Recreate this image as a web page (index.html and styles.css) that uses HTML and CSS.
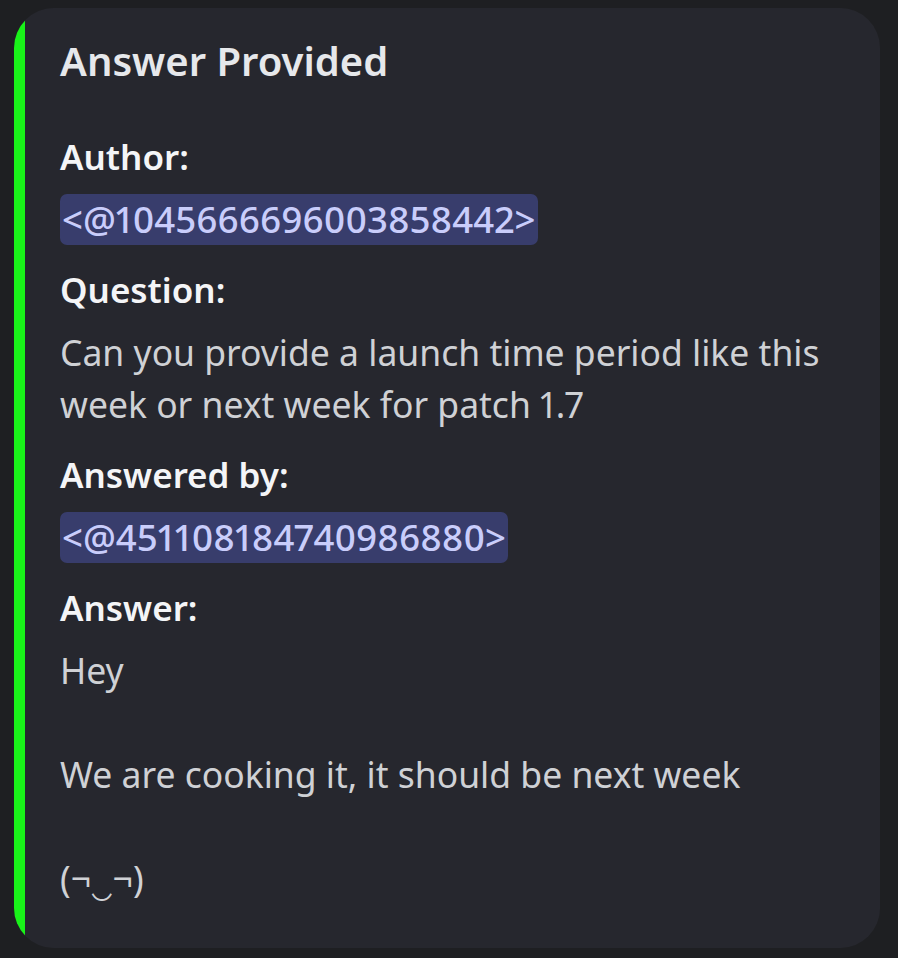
FILE: index.html
```html
<!DOCTYPE html>
<html lang="en">
<head>
<meta charset="utf-8">
<title>Answer Provided</title>
<link rel="stylesheet" href="styles.css">
</head>
<body>
<div class="embed">
  <div class="embed-title">Answer Provided</div>
  <div class="fields">
    <div class="field">
      <div class="field-name">Author:</div>
      <div class="field-value"><span class="mention">&lt;@1045666696003858442&gt;</span></div>
    </div>
    <div class="field">
      <div class="field-name">Question:</div>
      <div class="field-value">Can you provide a launch time period like this week or next week for patch 1.7</div>
    </div>
    <div class="field">
      <div class="field-name">Answered by:</div>
      <div class="field-value"><span class="mention">&lt;@451108184740986880&gt;</span></div>
    </div>
    <div class="field">
      <div class="field-name">Answer:</div>
      <div class="field-value">Hey<br><br>We are cooking it, it should be next week<br><br>(¬‿¬)</div>
    </div>
  </div>
</div>
</body>
</html>
```
FILE: styles.css
```css
html, body {
  margin: 0;
  padding: 0;
  background: #1e1f22;
}
body {
  font-family: "Noto Sans", "Open Sans", sans-serif;
  width: 898px;
  height: 958px;
  overflow: hidden;
}
.embed {
  margin: 8px 18px 0 14px;
  background: linear-gradient(to right, #19f219 11px, #26272e 11px);
  border-radius: 40px;
  padding: 21px 46px 44px 46px;
}
.embed-title {
  font-size: 40px;
  font-weight: 600;
  line-height: 64px;
  color: #e6e8eb;
}
.fields {
  margin-top: 38px;
  display: flex;
  flex-direction: column;
  gap: 19px;
}
.field-name {
  font-size: 35px;
  font-weight: 600;
  line-height: 52px;
  color: #f4f5f7;
  margin-bottom: 10px;
}
.field-value {
  font-size: 35.5px;
  line-height: 52px;
  color: #cfd1d5;
  font-variant-numeric: proportional-nums;
}
.mention {
  display: inline-block;
  font-size: 36.6px;
  font-weight: 500;
  line-height: 51px;
  padding: 0 2px;
  border-radius: 7px;
  background: #383d6c;
  color: #c9cdfb;
}
```
